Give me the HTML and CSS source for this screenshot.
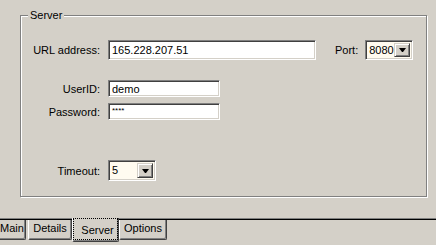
FILE: index.html
```html
<!DOCTYPE html>
<html>
<head>
<meta charset="utf-8">
<link rel="stylesheet" href="styles.css">
</head>
<body>
<div class="screen">
  <div class="group">
    <div class="legend">Server</div>
    <div class="row r1">
      <span class="lbl">URL address:</span>
      <div class="field url">165.228.207.51</div>
      <span class="port-lbl">Port:</span>
      <div class="combo port"><span class="val">8080</span><span class="btn"><i class="arrow"></i></span></div>
    </div>
    <div class="row r2">
      <span class="lbl">UserID:</span>
      <div class="field short">demo</div>
    </div>
    <div class="row r3">
      <span class="lbl">Password:</span>
      <div class="field short pw">****</div>
    </div>
    <div class="row r4">
      <span class="lbl">Timeout:</span>
      <div class="combo timeout"><span class="val">5</span><span class="btn"><i class="arrow"></i></span></div>
    </div>
  </div>
  <div class="tabbar">
    <div class="tab t-main">Main</div>
    <div class="tab t-details">Details</div>
    <div class="tab sel t-server"><span class="focus">Server</span></div>
    <div class="tab t-options">Options</div>
  </div>
</div>
</body>
</html>
```

FILE: styles.css
```css
html, body {
  margin: 0;
  padding: 0;
  background: #d4d0c8;
}
body {
  width: 436px;
  height: 245px;
  overflow: hidden;
  font-family: "Liberation Sans", Arial, sans-serif;
  font-size: 11px;
  color: #000;
}
.screen {
  display: flex;
  flex-direction: column;
}
.group {
  position: relative;
  box-sizing: border-box;
  margin: 15px 9px 0 20px;
  height: 182px;
  border: 1px solid #808080;
  box-shadow: 1px 1px 0 #fff, inset 1px 1px 0 #fff;
  padding-top: 24px;
}
.legend {
  position: absolute;
  top: -7px;
  left: 7px;
  padding: 0 2px;
  line-height: 13px;
  background: #d4d0c8;
}
.row {
  display: flex;
  align-items: center;
}
.lbl {
  width: 79px;
  text-align: right;
  margin-right: 8px;
  flex: none;
}
.r2 { margin-top: 20px; }
.r3 { margin-top: 6px; }
.r4 { margin-top: 40px; }

.field {
  box-sizing: border-box;
  background: #fff;
  border: 1px solid;
  border-color: #808080 #fff #fff #808080;
  box-shadow: inset 1px 1px 0 #404040, inset -1px -1px 0 #d4d0c8;
  padding-left: 3px;
  display: flex;
  align-items: center;
  flex: none;
}
.url {
  width: 208px;
  height: 20px;
}
.short {
  width: 112px;
  height: 17px;
}
.pw {
  font-size: 8px;
  align-items: flex-start;
  padding-top: 2px;
}
.port-lbl {
  margin-left: 19px;
  margin-right: 7px;
}
.combo {
  box-sizing: border-box;
  display: flex;
  align-items: center;
  justify-content: space-between;
  background: #fffbf0;
  border: 1px solid;
  border-color: #808080 #fff #fff #808080;
  box-shadow: inset 1px 1px 0 #404040, inset -1px -1px 0 #d4d0c8;
  padding: 2px 2px 2px 3px;
  height: 20px;
  flex: none;
}
.port { width: 48px; }
.timeout { width: 48px; height: 21px; }
.val {
  line-height: 13px;
}
.btn {
  box-sizing: border-box;
  width: 16px;
  align-self: stretch;
  background: #d4d0c8;
  border: 1px solid;
  border-color: #d4d0c8 #404040 #404040 #d4d0c8;
  box-shadow: inset 1px 1px 0 #fff, inset -1px -1px 0 #808080;
  display: flex;
  align-items: center;
  justify-content: center;
}
.arrow {
  display: block;
  width: 1px;
  height: 0;
  border-left: 3px solid transparent;
  border-right: 3px solid transparent;
  border-top: 4px solid #000;
}

.tabbar {
  margin-top: 21px;
  border-top: 1px solid #808080;
  box-shadow: inset 0 1px 0 #000;
  display: flex;
  align-items: flex-start;
  padding-top: 1px;
}
.tab {
  box-sizing: border-box;
  flex: none;
  height: 20px;
  padding-top: 2px;
  line-height: 13px;
  text-align: center;
  border-left: 1px solid #fff;
  border-right: 1px solid #404040;
  border-bottom: 1px solid #404040;
  box-shadow: inset -1px -1px 0 #808080;
  border-radius: 0 0 2px 2px;
}
.t-main {
  width: 26px;
  border-left: none;
  border-radius: 0 0 2px 0;
  text-align: left;
  padding-left: 0;
}
.t-details {
  width: 44px;
  margin-left: 2px;
}
.t-server {
  width: 47px;
  height: 24px;
  margin-top: -2px;
  padding: 0;
  background: #d4d0c8;
}
.focus {
  display: block;
  box-sizing: border-box;
  height: 22px;
  border: 1px dotted #000;
  padding-top: 5px;
  padding-left: 4px;
  line-height: 13px;
}
.t-options {
  width: 48px;
}
```
